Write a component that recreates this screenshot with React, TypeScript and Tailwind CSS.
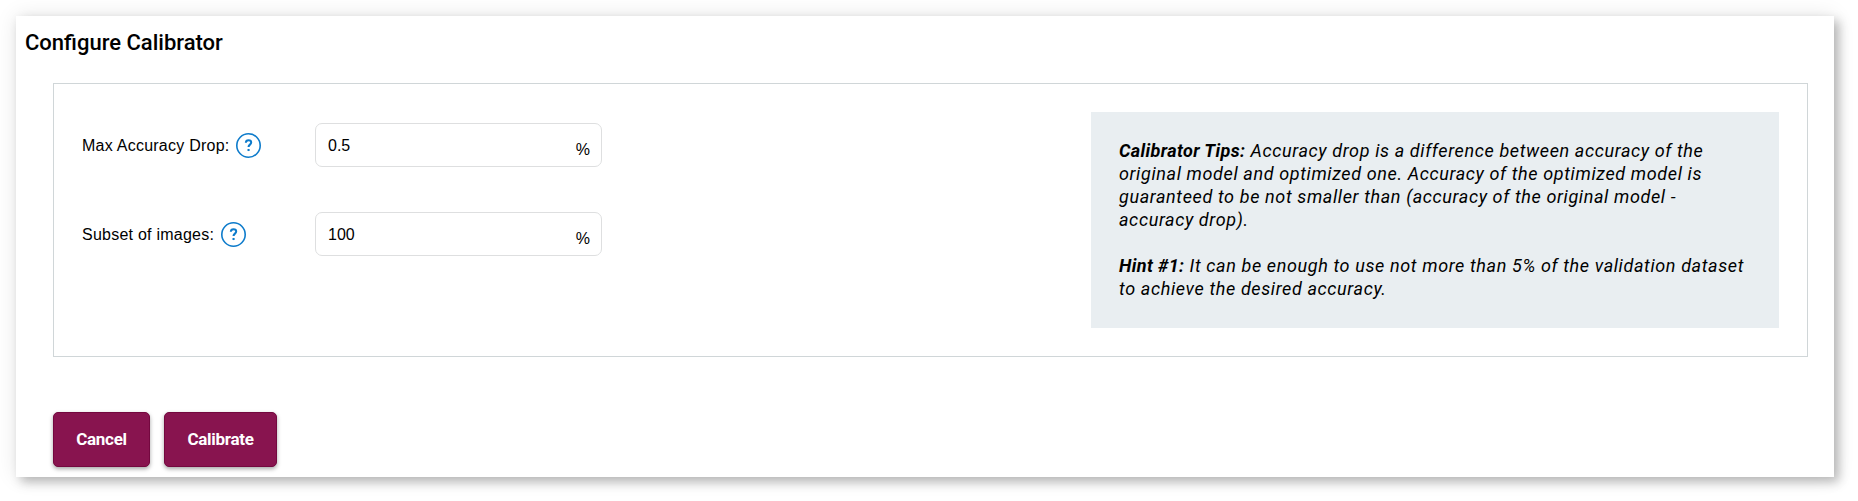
import type { ReactNode } from "react";

function HelpIcon() {
  return (
    <svg width="25" height="25" viewBox="0 0 25 25" fill="none" className="shrink-0" stroke="#0d7bcb">
      <circle cx="12.5" cy="12.5" r="11.7" strokeWidth="1.6" />
      <path d="M9.8 9.7c.1-1.6 1.2-2.5 2.7-2.5 1.6 0 2.7.8 2.7 2.3 0 2.1-2.7 2.2-2.7 4.6" strokeWidth="2" />
      <path d="M11.5 17h2.1" strokeWidth="2.1" />
    </svg>
  );
}

function Field({ label, value }: { label: string; value: string }) {
  return (
    <div className="flex h-11 items-center">
      <div className="flex w-[233px] shrink-0 items-center gap-[6.5px] pt-px text-[16px] tracking-[0.24px]">
        <span>{label}</span>
        <HelpIcon />
      </div>
      <div className="flex h-11 w-[287px] items-center justify-between rounded-[7px] border border-[#dedfe0] bg-white pt-px pr-[11px] pl-3 text-[16px]">
        <span>{value}</span>
        <span className="pt-2">%</span>
      </div>
    </div>
  );
}

function Button({ children, width }: { children: ReactNode; width: string }) {
  return (
    <button
      className={`${width} h-[55px] rounded-[5px] border border-[#74083f] bg-[#88144f] font-['Roboto'] text-[17px] font-bold tracking-[-0.3px] text-white shadow-[0_2px_4px_rgba(0,0,0,0.35)]`}
    >
      {children}
    </button>
  );
}

export default function App() {
  return (
    <div className="h-[501px] w-[1858px] overflow-hidden bg-white pt-4 pl-4 font-['Liberation_Sans',sans-serif] text-black">
      <main className="h-[461px] w-[1818px] bg-white shadow-[5px_5px_10px_rgba(0,0,0,0.25),0_0_20px_rgba(0,0,0,0.1)]">
        <h1 className="h-[67px] pt-[11px] pl-[9px] font-['Roboto'] text-[22px] leading-8 font-medium">
          Configure Calibrator
        </h1>
        <section className="ml-[37px] flex h-[274px] w-[1755px] justify-between border border-[#d0d6d8] pr-7 pl-7">
          <div className="flex flex-col gap-[45px] pt-[39px]">
            <Field label="Max Accuracy Drop:" value="0.5" />
            <Field label="Subset of images:" value="100" />
          </div>
          <aside className="mt-7 h-[216px] w-[688px] bg-[#e9eef1] px-7 pt-[27px] font-['Roboto'] text-[18px] leading-[23px] tracking-[0.62px] whitespace-nowrap italic">
            <p>
              <b className="tracking-[0.38px]">Calibrator Tips:</b> Accuracy drop is a difference between accuracy of the<br />
              original model and optimized one. Accuracy of the optimized model is<br />
              guaranteed to be not smaller than (accuracy of the original model -<br />
              accuracy drop).
            </p>
            <p className="mt-[23px]">
              <b className="tracking-[0.38px]">Hint #1:</b> It can be enough to use not more than 5% of the validation dataset<br />
              to achieve the desired accuracy.
            </p>
          </aside>
        </section>
        <div className="mt-[55px] ml-[37px] flex gap-[14px]">
          <Button width="w-[97px]">Cancel</Button>
          <Button width="w-[113px]">Calibrate</Button>
        </div>
      </main>
    </div>
  );
}
